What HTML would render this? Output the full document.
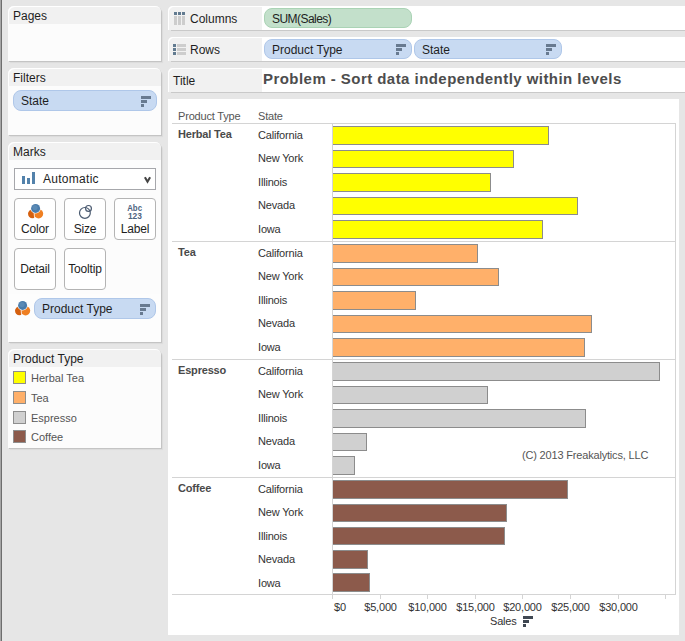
<!DOCTYPE html><html><head><meta charset="utf-8"><style>
*{margin:0;padding:0;box-sizing:border-box}
html,body{width:685px;height:641px;overflow:hidden;background:#e6e6e6;font-family:"Liberation Sans",sans-serif;position:relative}
div,span,i{position:absolute;display:block}
.t{font-size:11px;color:#333;white-space:nowrap;line-height:12px;letter-spacing:-0.18px}
.card{left:8px;width:153px;background:#fcfcfc;border-radius:6px 6px 0 0;box-shadow:1px 1px 0 #c4c4c4,2px 2px 1px rgba(0,0,0,0.05)}
.hd{left:0;top:0;right:0;height:18px;background:#f1f1f1;border-radius:6px 6px 0 0;box-shadow:inset 1px 1px 0 #fff;font-size:12px;color:#1e1e1e;padding-left:5px;line-height:21px;white-space:nowrap}
.pill{height:21px;border-radius:8px;font-size:12px;color:#1e1e1e;line-height:20px;padding-left:7px;white-space:nowrap}
.blue{background:#c8daf2;border:1px solid #afc7e9}
.green{background:#c3e0cb;border:1px solid #aad3b5}
.sort i{left:0;height:3px;background:#687a90}
.btn{width:42px;height:42px;border:1px solid #b4b4b4;border-radius:4px;background:#fff;font-size:12px;color:#1e1e1e;text-align:center}
.shelf{left:168px;width:517px;height:24px;background:#fff;border-radius:5px 0 0 0}
.ssh{left:171px;width:514px;height:1px;background:#c9c9c9}
.lb{left:0;top:0;width:94px;height:24px;background:#f1f1f1;border-radius:5px 0 0 0;box-shadow:inset 1px 1px 0 #fff;font-size:12px;color:#1e1e1e;line-height:27px;white-space:nowrap}
.hl{left:172px;width:504px;height:1px;background:#d4d4d4}
.bar{left:333px;border:1px solid #8c8c8c;border-left:none}
.lg{left:13px;width:13px;height:13px;border:1px solid #8e8e8e}
.lt{left:31px;font-size:11px;color:#555;line-height:12px;white-space:nowrap}
</style></head><body>
<div style="left:0;top:0;width:1px;height:641px;background:#a6a6a6"></div>
<div style="left:1px;top:0;width:1px;height:641px;background:#6e6e6e"></div>
<div class="card" style="top:6px;height:55px"><div class="hd">Pages</div></div>
<div class="card" style="top:68px;height:67px"><div class="hd">Filters</div><div class="pill blue" style="left:5px;top:22px;width:144px">State<div class="sort" style="left:127px;top:5px;width:10px;height:11px"><i style="top:0;width:10px;height:3px;background:#687a90"></i><i style="top:4px;width:6px;height:3px;background:#687a90"></i><i style="top:8px;width:3px;height:3px;background:#687a90"></i></div></div></div>
<div class="card" style="top:142px;height:200px"><div class="hd">Marks</div></div>
<div style="left:14px;top:168px;width:142px;height:22px;border:1px solid #a6a7ab;background:#fff"></div>
<div style="left:22px;top:176px;width:3px;height:8px;background:#5382ab"></div>
<div style="left:27px;top:178px;width:3px;height:6px;background:#5382ab"></div>
<div style="left:32px;top:172px;width:3px;height:12px;background:#5382ab"></div>
<div class="t" style="left:43px;top:172px;letter-spacing:0.28px;font-size:12px;color:#1e1e1e;line-height:14px">Automatic</div>
<svg style="position:absolute;left:138px;top:170px" width="20" height="20"><path d="M6.9 7.3 L9.5 11.7 L12.1 7.3" stroke="#444" stroke-width="2.1" fill="none"/></svg>
<div class="btn" style="left:14px;top:198px"></div>
<div class="t" style="left:14px;top:222px;width:42px;text-align:center;font-size:12px;color:#1e1e1e;line-height:14px">Color</div>
<div class="btn" style="left:64px;top:198px"></div>
<div class="t" style="left:64px;top:222px;width:42px;text-align:center;font-size:12px;color:#1e1e1e;line-height:14px">Size</div>
<div class="btn" style="left:114px;top:198px"></div>
<div class="t" style="left:114px;top:222px;width:42px;text-align:center;font-size:12px;color:#1e1e1e;line-height:14px">Label</div>
<div class="btn" style="left:14px;top:248px"></div>
<div class="t" style="left:14px;top:262px;width:42px;text-align:center;font-size:12px;color:#1e1e1e;line-height:14px">Detail</div>
<div class="btn" style="left:64px;top:248px"></div>
<div class="t" style="left:64px;top:262px;width:42px;text-align:center;font-size:12px;color:#1e1e1e;line-height:14px">Tooltip</div>
<svg style="position:absolute;left:27px;top:202px" width="18" height="18"><circle cx="5.4" cy="11.8" r="4.4" fill="#d5600f"/><circle cx="11.6" cy="11.8" r="4.6" fill="#ef7f22"/><path d="M7.0 10 L7.7 16.8" stroke="#fff" stroke-width="0.8"/><circle cx="8.6" cy="6.4" r="5.1" fill="#fff"/><circle cx="8.6" cy="6.4" r="4.5" fill="#4a7cab"/><circle cx="8" cy="5.6" r="2.6" fill="#6a97c0" opacity="0.5"/></svg>
<svg style="position:absolute;left:76px;top:200px" width="20" height="22"><circle cx="8.9" cy="12.9" r="5.4" stroke="#4a5a70" stroke-width="1.2" fill="none"/><circle cx="12.5" cy="8.4" r="2.9" stroke="#4a5a70" stroke-width="1.2" fill="none"/></svg>
<svg style="position:absolute;left:114px;top:198px" width="42" height="30"><g font-family="Liberation Sans" font-weight="bold" font-size="9.6" fill="#4d6480"><text x="13.2" y="13" textLength="14.8" lengthAdjust="spacingAndGlyphs">Abc</text><text x="13.9" y="21" textLength="14" lengthAdjust="spacingAndGlyphs">123</text></g></svg>
<div style="left:8px;top:294px;width:153px;height:48px;background:#fdfdfd"></div>
<svg style="position:absolute;left:14px;top:299px" width="18" height="18"><circle cx="5.4" cy="11.8" r="4.4" fill="#d5600f"/><circle cx="11.6" cy="11.8" r="4.6" fill="#ef7f22"/><path d="M7.0 10 L7.7 16.8" stroke="#fff" stroke-width="0.8"/><circle cx="8.6" cy="6.4" r="5.1" fill="#fff"/><circle cx="8.6" cy="6.4" r="4.5" fill="#4a7cab"/><circle cx="8" cy="5.6" r="2.6" fill="#6a97c0" opacity="0.5"/></svg>
<div class="pill blue" style="left:34px;top:298px;width:122px">Product Type<div class="sort" style="left:105px;top:5px;width:10px;height:11px"><i style="top:0;width:10px;height:3px;background:#687a90"></i><i style="top:4px;width:6px;height:3px;background:#687a90"></i><i style="top:8px;width:3px;height:3px;background:#687a90"></i></div></div>
<div class="card" style="top:349px;height:99px"><div class="hd">Product Type</div></div>
<div class="lg" style="top:371px;background:#ffff00"></div><div class="lt" style="top:372px">Herbal Tea</div>
<div class="lg" style="top:391px;background:#ffb06a"></div><div class="lt" style="top:392px">Tea</div>
<div class="lg" style="top:411px;background:#d0d0d0"></div><div class="lt" style="top:412px">Espresso</div>
<div class="lg" style="top:430px;background:#8c5a4b"></div><div class="lt" style="top:431px">Coffee</div>
<div class="ssh" style="top:30px"></div><div class="ssh" style="top:61px"></div><div class="ssh" style="top:92px"></div>
<div class="shelf" style="top:6px"><div class="lb" style="padding-left:22px">Columns</div><div class="pill green" style="left:96px;top:2px;width:148px;height:20px;letter-spacing:-0.55px">SUM(Sales)</div></div>
<div class="shelf" style="top:37px"><div class="lb" style="padding-left:22px">Rows</div><div class="pill blue" style="left:96px;top:2px;width:148px;height:20px">Product Type<div class="sort" style="left:131px;top:4px;width:10px;height:11px"><i style="top:0;width:10px;height:3px;background:#687a90"></i><i style="top:4px;width:6px;height:3px;background:#687a90"></i><i style="top:8px;width:3px;height:3px;background:#687a90"></i></div></div><div class="pill blue" style="left:246px;top:2px;width:148px;height:20px">State<div class="sort" style="left:131px;top:4px;width:10px;height:11px"><i style="top:0;width:10px;height:3px;background:#687a90"></i><i style="top:4px;width:6px;height:3px;background:#687a90"></i><i style="top:8px;width:3px;height:3px;background:#687a90"></i></div></div></div>
<div class="shelf" style="top:68px"><div class="lb" style="padding-left:5px">Title</div><div style="left:95px;top:3px;font-size:15px;letter-spacing:0.45px;font-weight:bold;color:#4d4d4d;white-space:nowrap;line-height:16px">Problem - Sort data independently within levels</div></div>
<div style="left:174px;top:12px;width:3px;height:3px;background:#627b90"></div>
<div style="left:174px;top:16px;width:3px;height:9px;background:#cdcdcd"></div>
<div style="left:178px;top:12px;width:3px;height:3px;background:#627b90"></div>
<div style="left:178px;top:16px;width:3px;height:9px;background:#cdcdcd"></div>
<div style="left:182px;top:12px;width:3px;height:3px;background:#627b90"></div>
<div style="left:182px;top:16px;width:3px;height:9px;background:#cdcdcd"></div>
<div style="left:173px;top:44px;width:3px;height:3px;background:#627b90"></div>
<div style="left:177px;top:44px;width:9px;height:3px;background:#cdcdcd"></div>
<div style="left:173px;top:48px;width:3px;height:3px;background:#627b90"></div>
<div style="left:177px;top:48px;width:9px;height:3px;background:#cdcdcd"></div>
<div style="left:173px;top:52px;width:3px;height:3px;background:#627b90"></div>
<div style="left:177px;top:52px;width:9px;height:3px;background:#cdcdcd"></div>
<div style="left:168px;top:99px;width:511px;height:536px;background:#fff"></div>
<div class="t" style="left:178px;top:110px;color:#555">Product Type</div>
<div class="t" style="left:258px;top:110px;color:#555">State</div>
<div class="hl" style="top:123px"></div>
<div class="hl" style="top:241px"></div>
<div class="hl" style="top:359px"></div>
<div class="hl" style="top:477px"></div>
<div class="hl" style="top:594px"></div>
<div style="left:675px;top:123px;width:1px;height:472px;background:#d4d4d4"></div>
<div style="left:332px;top:123px;width:1px;height:476px;background:#d4d4d4"></div>
<div class="t" style="left:178px;top:128px;font-weight:bold;color:#4a4a4a">Herbal Tea</div>
<div class="t" style="left:258px;top:129px">California</div>
<div class="bar" style="top:126px;height:19px;width:216px;background:#ffff00"></div>
<div class="t" style="left:258px;top:152px">New York</div>
<div class="bar" style="top:150px;height:18px;width:181px;background:#ffff00"></div>
<div class="t" style="left:258px;top:176px">Illinois</div>
<div class="bar" style="top:173px;height:19px;width:158px;background:#ffff00"></div>
<div class="t" style="left:258px;top:199px">Nevada</div>
<div class="bar" style="top:197px;height:18px;width:245px;background:#ffff00"></div>
<div class="t" style="left:258px;top:223px">Iowa</div>
<div class="bar" style="top:220px;height:19px;width:210px;background:#ffff00"></div>
<div class="t" style="left:178px;top:246px;font-weight:bold;color:#4a4a4a">Tea</div>
<div class="t" style="left:258px;top:247px">California</div>
<div class="bar" style="top:244px;height:19px;width:145px;background:#ffb06a"></div>
<div class="t" style="left:258px;top:270px">New York</div>
<div class="bar" style="top:268px;height:18px;width:166px;background:#ffb06a"></div>
<div class="t" style="left:258px;top:294px">Illinois</div>
<div class="bar" style="top:291px;height:19px;width:83px;background:#ffb06a"></div>
<div class="t" style="left:258px;top:317px">Nevada</div>
<div class="bar" style="top:315px;height:18px;width:259px;background:#ffb06a"></div>
<div class="t" style="left:258px;top:341px">Iowa</div>
<div class="bar" style="top:338px;height:19px;width:252px;background:#ffb06a"></div>
<div class="t" style="left:178px;top:364px;font-weight:bold;color:#4a4a4a">Espresso</div>
<div class="t" style="left:258px;top:365px">California</div>
<div class="bar" style="top:362px;height:19px;width:327px;background:#d0d0d0"></div>
<div class="t" style="left:258px;top:388px">New York</div>
<div class="bar" style="top:386px;height:18px;width:155px;background:#d0d0d0"></div>
<div class="t" style="left:258px;top:412px">Illinois</div>
<div class="bar" style="top:409px;height:19px;width:253px;background:#d0d0d0"></div>
<div class="t" style="left:258px;top:435px">Nevada</div>
<div class="bar" style="top:433px;height:18px;width:34px;background:#d0d0d0"></div>
<div class="t" style="left:258px;top:459px">Iowa</div>
<div class="bar" style="top:456px;height:19px;width:22px;background:#d0d0d0"></div>
<div class="t" style="left:178px;top:482px;font-weight:bold;color:#4a4a4a">Coffee</div>
<div class="t" style="left:258px;top:483px">California</div>
<div class="bar" style="top:480px;height:19px;width:235px;background:#8c5a4b"></div>
<div class="t" style="left:258px;top:506px">New York</div>
<div class="bar" style="top:504px;height:18px;width:174px;background:#8c5a4b"></div>
<div class="t" style="left:258px;top:530px">Illinois</div>
<div class="bar" style="top:527px;height:18px;width:172px;background:#8c5a4b"></div>
<div class="t" style="left:258px;top:553px">Nevada</div>
<div class="bar" style="top:550px;height:19px;width:35px;background:#8c5a4b"></div>
<div class="t" style="left:258px;top:577px">Iowa</div>
<div class="bar" style="top:573px;height:19px;width:37px;background:#8c5a4b"></div>
<div style="left:332px;top:594px;width:1px;height:5px;background:#d4d4d4"></div>
<div style="left:380px;top:594px;width:1px;height:5px;background:#d4d4d4"></div>
<div style="left:427px;top:594px;width:1px;height:5px;background:#d4d4d4"></div>
<div style="left:475px;top:594px;width:1px;height:5px;background:#d4d4d4"></div>
<div style="left:522px;top:594px;width:1px;height:5px;background:#d4d4d4"></div>
<div style="left:570px;top:594px;width:1px;height:5px;background:#d4d4d4"></div>
<div style="left:618px;top:594px;width:1px;height:5px;background:#d4d4d4"></div>
<div style="left:665px;top:594px;width:1px;height:5px;background:#d4d4d4"></div>
<div class="t" style="left:334px;top:601px">$0</div>
<div class="t" style="left:340px;top:601px;width:81px;text-align:center">$5,000</div>
<div class="t" style="left:387px;top:601px;width:81px;text-align:center">$10,000</div>
<div class="t" style="left:435px;top:601px;width:81px;text-align:center">$15,000</div>
<div class="t" style="left:482px;top:601px;width:81px;text-align:center">$20,000</div>
<div class="t" style="left:530px;top:601px;width:81px;text-align:center">$25,000</div>
<div class="t" style="left:578px;top:601px;width:81px;text-align:center">$30,000</div>
<div class="t" style="left:490px;top:615px">Sales</div>
<div class="sort" style="left:523px;top:616px;width:10px;height:11px"><i style="top:0;width:10px;height:3px;background:#404852"></i><i style="top:4px;width:6px;height:3px;background:#404852"></i><i style="top:8px;width:3px;height:3px;background:#404852"></i></div>
<div class="t" style="left:522px;top:449px;color:#555">(C) 2013 Freakalytics, LLC</div>
</body></html>
